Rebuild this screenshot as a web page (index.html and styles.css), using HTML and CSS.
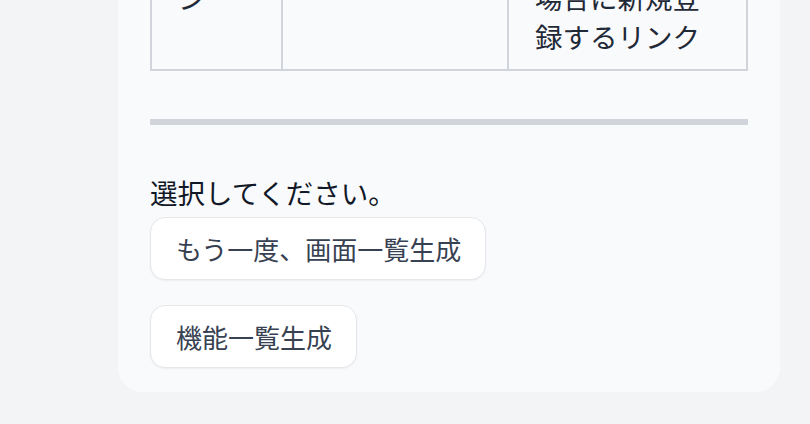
FILE: index.html
```html
<!DOCTYPE html>
<html lang="ja">
<head>
<meta charset="utf-8">
<link rel="stylesheet" href="styles.css">
</head>
<body>
<div class="page">
  <div class="card">
    <table class="spec">
      <tbody>
        <tr>
          <td class="c1">登録ボタン</td>
          <td class="c2">/signup</td>
          <td class="c3">アカウントを持っていない場合に新規登録するリンク</td>
        </tr>
      </tbody>
    </table>
    <hr class="rule">
    <p class="prompt">選択してください。</p>
    <div class="actions">
      <button class="choice">もう一度、画面一覧生成</button>
      <button class="choice">機能一覧生成</button>
    </div>
  </div>
</div>
</body>
</html>
```
FILE: styles.css
```css
html, body {
  margin: 0;
  padding: 0;
  background: #f3f4f6;
  overflow: hidden;
  height: 424px;
}
body {
  font-family: "Noto Sans CJK JP", "Noto Sans", sans-serif;
  font-size: 27.5px;
  line-height: 39px;
  color: #1f2937;
}
.page {
  padding-left: 118px;
}
.card {
  width: 662px;
  box-sizing: border-box;
  margin-top: -147px;
  background: #f9fafb;
  border-radius: 24px;
  padding: 32px 32px 24px;
}
.spec {
  width: 598px;
  border-collapse: collapse;
  table-layout: fixed;
}
.spec td {
  border: 2px solid #d1d5db;
  padding: 13px 26px;
  vertical-align: top;
  color: #1f2937;
}
.c1 { width: 131px; box-sizing: border-box; }
.c2 { width: 226px; box-sizing: border-box; }
.c3 { padding-right: 40px !important; }
.rule {
  border: 0;
  height: 6px;
  background: #d1d5db;
  margin: 48px 0 48px;
}
.prompt {
  margin: 0;
  color: #111827;
}
.actions {
  display: flex;
  flex-direction: column;
  align-items: flex-start;
  gap: 25px;
  margin-top: 5px;
}
.choice {
  font-family: inherit;
  font-size: 26px;
  line-height: 41px;
  color: #374151;
  background: #ffffff;
  border: 1px solid #e5e7eb;
  border-radius: 15px;
  padding: 10px 24px 10px 25px;
  box-shadow: 0 1px 2px rgba(0,0,0,0.05);
}
```
